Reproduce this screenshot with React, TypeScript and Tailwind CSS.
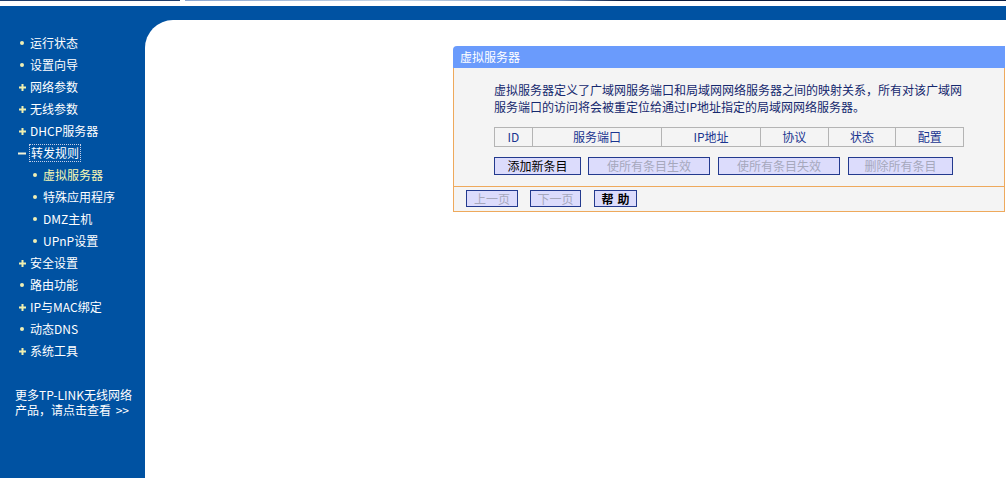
import React from "react";

// Router admin page: left menu + "虚拟服务器" panel.
const FONT = { fontFamily: '"Noto Sans CJK SC", "Noto Sans", sans-serif' };

type Mark = "dot" | "plus" | "minus";

interface MenuItem {
  label: string;
  mark: Mark;
  sub?: boolean;
  active?: boolean;
  focus?: boolean;
}

const MENU: MenuItem[] = [
  { label: "运行状态", mark: "dot" },
  { label: "设置向导", mark: "dot" },
  { label: "网络参数", mark: "plus" },
  { label: "无线参数", mark: "plus" },
  { label: "DHCP服务器", mark: "plus" },
  { label: "转发规则", mark: "minus", focus: true },
  { label: "虚拟服务器", mark: "dot", sub: true, active: true },
  { label: "特殊应用程序", mark: "dot", sub: true },
  { label: "DMZ主机", mark: "dot", sub: true },
  { label: "UPnP设置", mark: "dot", sub: true },
  { label: "安全设置", mark: "plus" },
  { label: "路由功能", mark: "dot" },
  { label: "IP与MAC绑定", mark: "plus" },
  { label: "动态DNS", mark: "dot" },
  { label: "系统工具", mark: "plus" },
];

const COLS = [
  { label: "ID", w: "w-[37px]" },
  { label: "服务端口", w: "w-[130px]" },
  { label: "IP地址", w: "w-[99px]" },
  { label: "协议", w: "w-[68px]" },
  { label: "状态", w: "w-[68px]" },
  { label: "配置", w: "w-[68px]" },
];

const Bullet = ({ mark }: { mark: Mark }) => {
  if (mark === "dot") return <span className="w-[4px] h-[4px] rounded-full bg-[#efefb4]" />;
  if (mark === "plus")
    return (
      <svg width="7" height="7" viewBox="0 0 7 7">
        <rect x="0" y="2.5" width="7" height="2" fill="#efefb0" />
        <rect x="2.5" y="0" width="2" height="7" fill="#efefb0" />
      </svg>
    );
  return (
    <svg width="8" height="3" viewBox="0 0 8 3">
      <rect x="0" y="0.5" width="8" height="2" fill="#f4f4d8" />
    </svg>
  );
};

const Btn = ({
  label,
  w,
  h = "h-[18px]",
  disabled,
  bold,
}: {
  label: string;
  w: string;
  h?: string;
  disabled?: boolean;
  bold?: boolean;
}) => (
  <div
    className={`${w} ${h} flex items-center justify-center border border-[#233a8e] bg-[#dcdcfc] text-[12px] leading-none ${
      disabled ? "text-[#a6a8bc]" : "text-black"
    } ${bold ? "font-bold tracking-[4px] pl-[4px]" : ""}`}
  >
    {label}
  </div>
);

export default function App() {
  return (
    <div className="w-[1006px] h-[478px] overflow-hidden bg-white flex flex-col" style={FONT}>
      <div className="h-[1px] bg-[linear-gradient(to_right,#1f3d6b_0px,#1f3d6b_180px,#ffffff_180px,#ffffff_185px,#8aa6d0_185px,#c8d8e8_400px,#6b8ab8_560px,#0b1d40_622px,#0b1d40_100%)]" />
      <div className="h-[5px]" />

      <div className="flex-1 flex bg-[#0052a2]">
        {/* left menu */}
        <div className="w-[145px] shrink-0 flex flex-col pt-[26px] text-[12px] text-white">
          {MENU.map((m) => (
            <div
              key={m.label}
              className={`h-[22px] flex items-center ${m.sub ? "pl-[30px]" : "pl-[17px]"}`}
            >
              <span className="w-[10px] flex justify-center">
                <Bullet mark={m.mark} />
              </span>
              <span
                className={`ml-[3px] leading-[16px] ${m.active ? "text-[#f8f8b4]" : ""} ${
                  m.focus ? "outline outline-1 outline-dotted outline-[#c8d0e8] px-[1px]" : ""
                }`}
              >
                {m.label}
              </span>
            </div>
          ))}
          <div className="mt-[25px] pl-[15px] leading-[15px] text-[12px]">
            <div>更多TP-LINK无线网络</div>
            <div>
              产品，请点击查看 <span className="ml-[2px]">&gt;&gt;</span>
            </div>
          </div>
        </div>

        {/* content */}
        <div className="flex-1 flex flex-col">
          <div className="h-[14px]" />
          <div className="flex-1 bg-white rounded-tl-[28px] pl-[308px] pt-[26px]">
            <div className="w-[552px] text-[12px]">
              <div className="h-[22px] bg-[#6a9bfc] rounded-tl-[4px] text-white flex items-center pl-[7px]">
                虚拟服务器
              </div>
              <div className="border-x border-b border-[#eea95c] bg-[#f4f4f4]">
                <div className="pl-[40px] pt-[13px] pb-[11px] border-b border-[#eea95c]">
                  <div className="text-[#15286e] leading-[17px] whitespace-nowrap">
                    <div>虚拟服务器定义了广域网服务端口和局域网网络服务器之间的映射关系，所有对该广域网</div>
                    <div>服务端口的访问将会被重定位给通过IP地址指定的局域网网络服务器。</div>
                  </div>
                  <div className="mt-[12px] w-[470px] h-[20px] flex border border-[#b4b4b4]">
                    {COLS.map((c, i) => (
                      <div
                        key={c.label}
                        className={`${c.w} flex items-center justify-center text-[#1a3590] ${
                          i > 0 ? "border-l border-[#b4b4b4]" : ""
                        }`}
                      >
                        {c.label}
                      </div>
                    ))}
                  </div>
                  <div className="mt-[10px] flex">
                    <Btn label="添加新条目" w="w-[87px]" />
                    <div className="ml-[7px]">
                      <Btn label="使所有条目生效" w="w-[122px]" disabled />
                    </div>
                    <div className="ml-[8px]">
                      <Btn label="使所有条目失效" w="w-[122px]" disabled />
                    </div>
                    <div className="ml-[8px]">
                      <Btn label="删除所有条目" w="w-[105px]" disabled />
                    </div>
                  </div>
                </div>
                <div className="flex pl-[12px] pt-[3px] pb-[4px]">
                  <Btn label="上一页" w="w-[52px]" h="h-[17px]" disabled />
                  <div className="ml-[12px]">
                    <Btn label="下一页" w="w-[51px]" h="h-[17px]" disabled />
                  </div>
                  <div className="ml-[13px]">
                    <Btn label="帮助" w="w-[43px]" h="h-[17px]" bold />
                  </div>
                </div>
              </div>
            </div>
          </div>
        </div>
      </div>
    </div>
  );
}
